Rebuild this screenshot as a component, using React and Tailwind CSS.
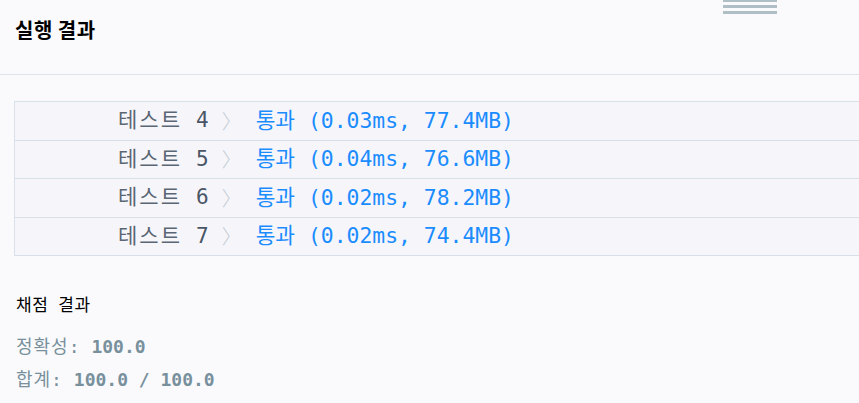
import React from 'react';

const rows = [
  { n: 4, result: '(0.03ms, 77.4MB)' },
  { n: 5, result: '(0.04ms, 76.6MB)' },
  { n: 6, result: '(0.02ms, 78.2MB)' },
  { n: 7, result: '(0.02ms, 74.4MB)' },
];

const mono = { fontFamily: '"DejaVu Sans Mono", "Noto Sans CJK KR", monospace' };

export default function App() {
  return (
    <div className="relative w-[859px] h-[403px] overflow-hidden bg-[#fafafc] text-black">
      {/* grip lines at the top */}
      <div className="absolute left-[723px] top-0 w-[54px] flex flex-col gap-[3px]">
        <div className="h-[3px] -mt-[1px] bg-[#b0bec5]" />
        <div className="h-[3px] bg-[#b0bec5]" />
        <div className="h-[3px] bg-[#b0bec5]" />
      </div>

      <div className="h-[75px] border-b border-[#dde3ea] px-[15px] pt-[17px]">
        <h2 className="text-[20px] font-bold leading-[26px] tracking-[0.5px] font-['Noto_Sans_CJK_KR',sans-serif]">실행 결과</h2>
      </div>

      <div className="pl-[14px] pt-[26px]">
        <div className="border-l border-t border-[#d8e0ea] bg-[#f6f6fa]">
          {rows.map((r) => (
            <div
              key={r.n}
              className="h-[38.5px] flex items-center border-b border-[#d8e0ea] pl-[103px] text-[21px]"
              style={mono}
            >
              <span className="text-[#5b6675] tracking-[2px]">테스트</span>
              <span className="ml-[14px] text-[#4a5566]">{r.n}</span>
              <span className="ml-[13px] text-[#c5ccd4] font-['Noto_Sans_CJK_KR',sans-serif] text-[20px] font-light">〉</span>
              <span className="ml-[14px] text-[#1a8cff] text-[21.4px]">통과 {r.result}</span>
            </div>
          ))}
        </div>
      </div>

      <div className="px-[16px] pt-[37px]">
        <h3 className="flex text-[17px] leading-[22px] font-['Noto_Sans_CJK_KR',sans-serif]">
          <span className="tracking-[0.5px]">채점</span>
          <span className="ml-[10px] tracking-[0.5px]">결과</span>
        </h3>
        <div className="mt-[21px] text-[18px] leading-[22px] text-[#78909c]" style={mono}>
          <span className="tracking-[1px]">정확성:</span> <span className="font-bold">100.0</span>
        </div>
        <div className="mt-[11px] text-[18px] leading-[22px] text-[#78909c]" style={mono}>
          <span className="tracking-[1px]">합계:</span> <span className="font-bold">100.0 / 100.0</span>
        </div>
      </div>
    </div>
  );
}
